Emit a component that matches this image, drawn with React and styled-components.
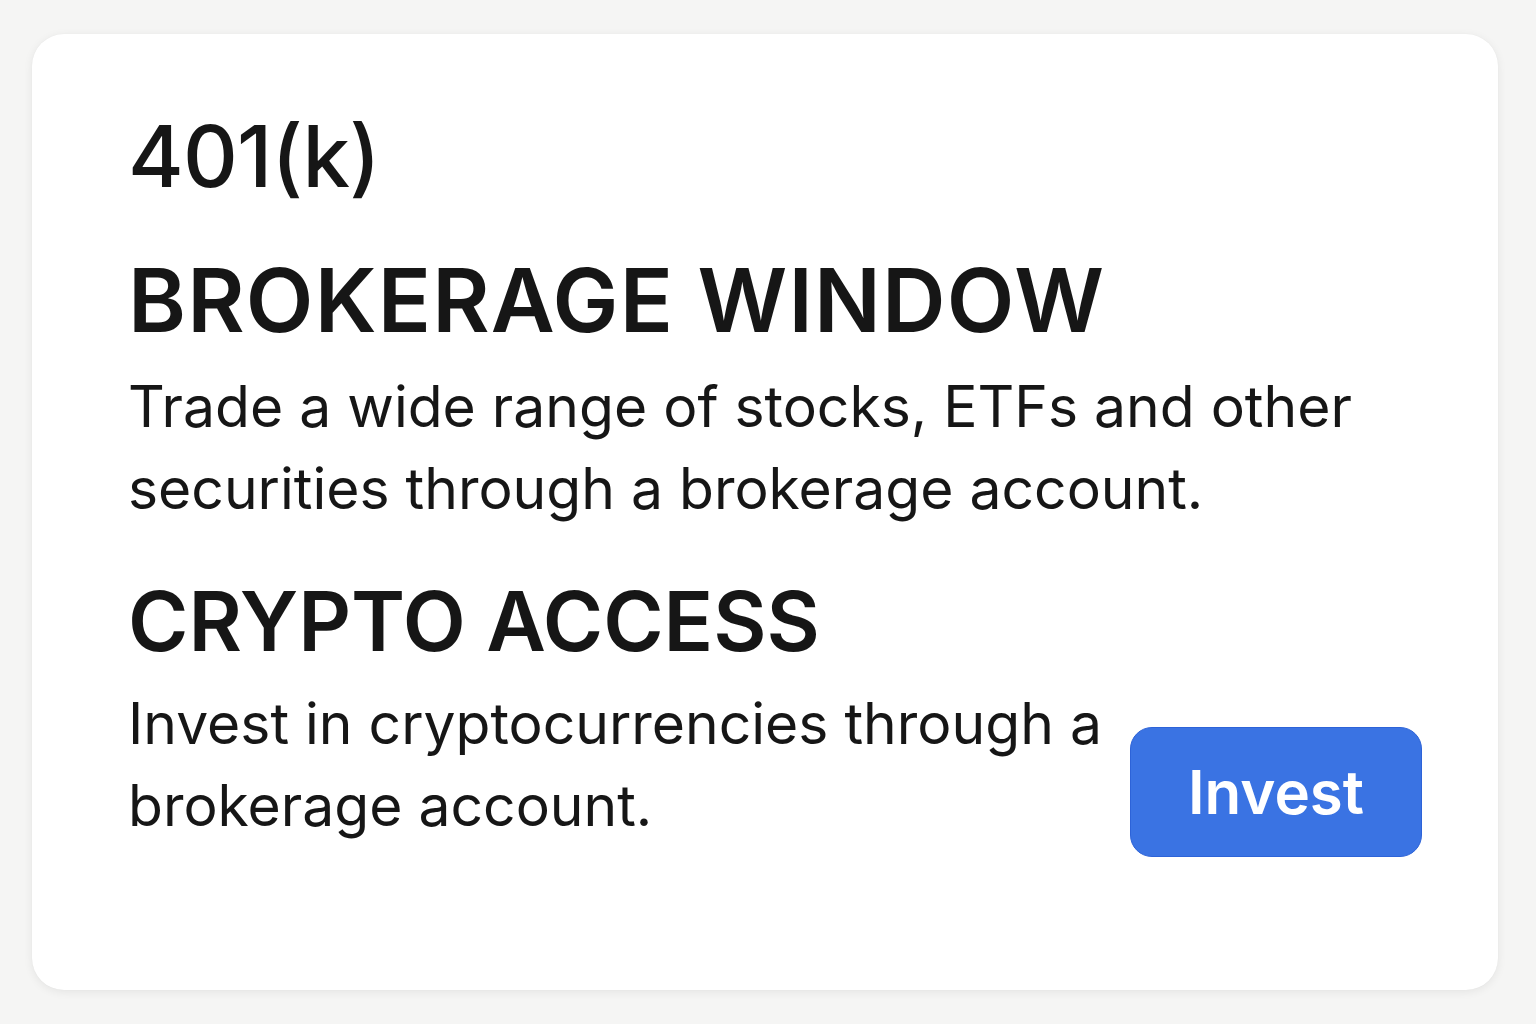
import React from 'react'
import styled, { createGlobalStyle } from 'styled-components'

const GlobalStyle = createGlobalStyle`
  html, body {
    margin: 0;
    padding: 0;
    background: #f5f5f4;
    font-family: Inter, "Noto Sans", "Liberation Sans", sans-serif;
    color: #161616;
  }
`

const Page = styled.div`
  width: 1536px;
  height: 1024px;
  box-sizing: border-box;
  padding: 34px 38px 34px 32px;
`

const Card = styled.section`
  box-sizing: border-box;
  height: 956px;
  background: #ffffff;
  border-radius: 32px;
  box-shadow: 0 2px 10px rgba(0, 0, 0, 0.07), 0 0 1px rgba(0, 0, 0, 0.06);
  padding: 72px 76px 0 96px;
  display: flex;
  flex-direction: column;
`

const PlanName = styled.h1`
  margin: 0;
  font-size: 85px;
  line-height: 1.2;
  font-weight: 500;
  letter-spacing: -0.8px;
`

const SectionTitle = styled.h2`
  margin: ${p => p.$top}px 0 0;
  font-size: ${p => p.$size}px;
  line-height: 1.2;
  font-weight: 600;
  letter-spacing: ${p => p.$track}px;
  text-transform: uppercase;
`

const Description = styled.p`
  margin: ${p => p.$top}px 0 0;
  font-size: 57px;
  line-height: 82px;
  font-weight: 400;
  max-width: ${p => p.$max || 'none'};
`

const ActionRow = styled.div`
  display: flex;
  align-items: flex-end;
  justify-content: space-between;
  gap: 20px;
`

const Button = styled.button`
  flex: none;
  width: 292px;
  height: 130px;
  margin-bottom: -10px;
  border: 1px solid #2d63d8;
  border-radius: 22px;
  background: #3a73e3;
  color: #ffffff;
  font-family: inherit;
  font-size: 60px;
  font-weight: 600;
  cursor: pointer;
`

export default function App() {
  return (
    <>
      <GlobalStyle />
      <Page>
        <Card>
          <PlanName>401(k)</PlanName>
          <SectionTitle $top={40} $size={88} $track={1.2}>
            Brokerage Window
          </SectionTitle>
          <Description $top={12}>
            Trade a wide range of stocks, ETFs and other securities through a
            brokerage account.
          </Description>
          <SectionTitle $top={43} $size={82} $track={0}>
            Crypto Access
          </SectionTitle>
          <ActionRow>
            <Description $top={12} $max="975px">
              Invest in cryptocurrencies through a brokerage account.
            </Description>
            <Button>Invest</Button>
          </ActionRow>
        </Card>
      </Page>
    </>
  )
}
